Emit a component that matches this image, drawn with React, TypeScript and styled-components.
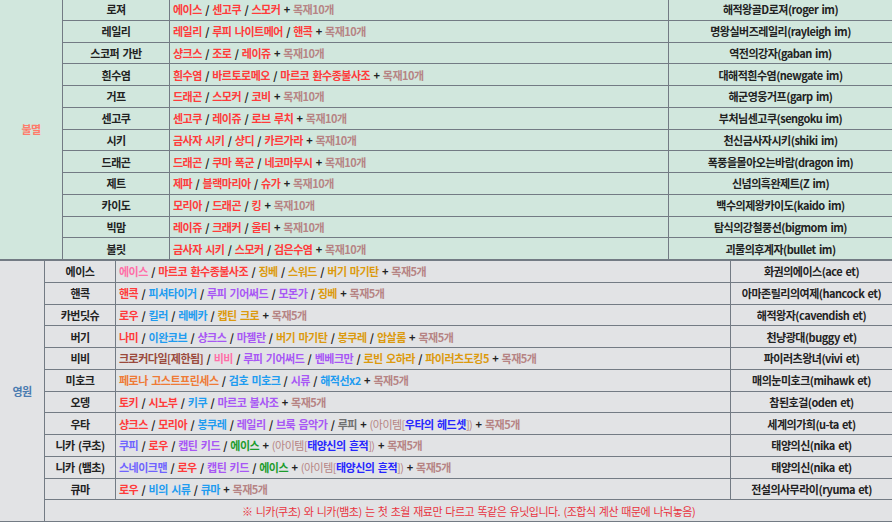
import { createGlobalStyle, styled } from 'styled-components';

const GlobalStyle = createGlobalStyle`
    body {
        margin: 0;
        font-family: "Noto Sans CJK KR", "Noto Sans", sans-serif;
        font-size: 11px;
        letter-spacing: -0.5px;
        word-spacing: 1.3px;
        color: #222;
        overflow: hidden;
    }
`;

const colors: Record<string, string> = {
    red: '#ff3b3b',
    pink: '#ff6fa8',
    gold: '#dc9a0e',
    blue: '#1f9cf0',
    purple: '#a857f5',
    violet: '#6f63ff',
    green: '#1c9c2c',
    gray: '#707070',
    brown: '#9b4a3c',
    orange: '#ef7b35',
    wood: '#b68484',
    item: '#2626ff',
};

const line = '#737b84';

type Part = [string, string];
type Row = { name: string; parts: Part[]; item?: string; wood: number; title: string };

const immortal: Row[] = [
    { name: '로져', parts: [['에이스', 'red'], ['센고쿠', 'red'], ['스모커', 'red']], wood: 10, title: '해적왕골D로져(roger im)' },
    { name: '레일리', parts: [['레일리', 'red'], ['루피 나이트메어', 'red'], ['핸콕', 'red']], wood: 10, title: '명왕실버즈레일리(rayleigh im)' },
    { name: '스코퍼 가반', parts: [['샹크스', 'red'], ['조로', 'red'], ['레이쥬', 'red']], wood: 10, title: '역전의강자(gaban im)' },
    { name: '흰수염', parts: [['흰수염', 'red'], ['바르토로메오', 'red'], ['마르코 환수종불사조', 'red']], wood: 10, title: '대해적흰수염(newgate im)' },
    { name: '거프', parts: [['드래곤', 'red'], ['스모커', 'red'], ['코비', 'red']], wood: 10, title: '해군영웅거프(garp im)' },
    { name: '센고쿠', parts: [['센고쿠', 'red'], ['레이쥬', 'red'], ['로브 루치', 'red']], wood: 10, title: '부처님센고쿠(sengoku im)' },
    { name: '시키', parts: [['금사자 시키', 'red'], ['샹디', 'red'], ['카르가라', 'red']], wood: 10, title: '천신금사자시키(shiki im)' },
    { name: '드래곤', parts: [['드래곤', 'red'], ['쿠마 폭군', 'red'], ['네코마무시', 'red']], wood: 10, title: '폭풍을몰아오는바람(dragon im)' },
    { name: '제트', parts: [['제파', 'red'], ['블랙마리아', 'red'], ['슈가', 'red']], wood: 10, title: '신념의흑완제트(Z im)' },
    { name: '카이도', parts: [['모리아', 'red'], ['드래곤', 'red'], ['킹', 'red']], wood: 10, title: '백수의제왕카이도(kaido im)' },
    { name: '빅맘', parts: [['레이쥬', 'red'], ['크래커', 'red'], ['울티', 'red']], wood: 10, title: '탐식의강철풍선(bigmom im)' },
    { name: '불릿', parts: [['금사자 시키', 'red'], ['스모커', 'red'], ['검은수염', 'red']], wood: 10, title: '괴물의후계자(bullet im)' },
];

const eternal: Row[] = [
    { name: '에이스', parts: [['에이스', 'pink'], ['마르코 환수종불사조', 'red'], ['징베', 'gold'], ['스워드', 'gold'], ['버기 마기탄', 'gold']], wood: 5, title: '화권의에이스(ace et)' },
    { name: '핸콕', parts: [['핸콕', 'red'], ['피셔타이거', 'blue'], ['루피 기어써드', 'purple'], ['모몬가', 'purple'], ['징베', 'gold']], wood: 5, title: '아마존릴리의여제(hancock et)' },
    { name: '카번딧슈', parts: [['로우', 'red'], ['킬러', 'blue'], ['레베카', 'blue'], ['캡틴 크로', 'gold']], wood: 5, title: '해적왕자(cavendish et)' },
    { name: '버기', parts: [['나미', 'red'], ['이완코브', 'blue'], ['샹크스', 'purple'], ['마젤란', 'purple'], ['버기 마기탄', 'gold'], ['봉쿠레', 'gold'], ['압살롬', 'gold']], wood: 5, title: '천냥광대(buggy et)' },
    { name: '비비', parts: [['크로커다일[제한됨]', 'brown'], ['비비', 'pink'], ['루피 기어써드', 'purple'], ['벤베크만', 'purple'], ['로빈 오하라', 'gold'], ['파이러츠도킹5', 'gold']], wood: 5, title: '파이러츠왕녀(vivi et)' },
    { name: '미호크', parts: [['페로나 고스트프린세스', 'orange'], ['검호 미호크', 'blue'], ['시류', 'purple'], ['해적선x2', 'blue']], wood: 5, title: '매의눈미호크(mihawk et)' },
    { name: '오뎅', parts: [['토키', 'red'], ['시노부', 'red'], ['키쿠', 'blue'], ['마르코 불사조', 'purple']], wood: 5, title: '참된호걸(oden et)' },
    { name: '우타', parts: [['샹크스', 'red'], ['모리아', 'red'], ['봉쿠레', 'blue'], ['레일리', 'purple'], ['브룩 음악가', 'purple'], ['루피', 'gray']], item: '우타의 헤드셋', wood: 5, title: '세계의가희(u-ta et)' },
    { name: '니카 (쿠초)', parts: [['쿠피', 'violet'], ['로우', 'red'], ['캡틴 키드', 'purple'], ['에이스', 'green']], item: '태양신의 흔적', wood: 5, title: '태양의신(nika et)' },
    { name: '니카 (뱀초)', parts: [['스네이크맨', 'violet'], ['로우', 'red'], ['캡틴 키드', 'purple'], ['에이스', 'green']], item: '태양신의 흔적', wood: 5, title: '태양의신(nika et)' },
    { name: '큐마', parts: [['로우', 'red'], ['비의 시류', 'blue'], ['큐마', 'blue']], wood: 5, title: '전설의사무라이(ryuma et)' },
];

const Page = styled.div`
    margin-top: -2px;
`;

const Table = styled.div<{ $cols: string; $bg: string }>`
    display: grid;
    grid-template-columns: ${p => p.$cols};
    grid-auto-rows: 20.75px;
    gap: 1px;
    background: ${line};
    border-top: 1px solid ${line};
    border-bottom: 1px solid ${line};

    & > * {
        background: ${p => p.$bg};
    }
`;

const GroupLabel = styled.div<{ $rows: number; $color: string }>`
    grid-row: span ${p => p.$rows};
    display: flex;
    align-items: center;
    justify-content: center;
    color: ${p => p.$color};
    font-weight: bold;
`;

const NameCell = styled.div`
    display: flex;
    align-items: center;
    justify-content: center;
    font-weight: bold;
    white-space: nowrap;
`;

const MaterialCell = styled.div`
    display: flex;
    align-items: center;
    padding-left: 3px;
    font-weight: bold;
    white-space: pre;
    overflow: hidden;
`;

const TitleCell = styled(NameCell)``;

const NoteCell = styled.div`
    grid-column: span 3;
    display: flex;
    align-items: center;
    justify-content: center;
    color: #e8333f;
`;

const Token = styled.span<{ $c: string }>`
    color: ${p => colors[p.$c]};
`;

const ItemName = styled.span`
    color: ${colors.item};
    font-weight: bold;
`;

const ItemWrap = styled.span`
    color: ${colors.wood};
    font-weight: normal;
`;

const Materials = ({ row }: { row: Row }) => (
    <MaterialCell>
        {row.parts.map(([text, c], i) => (
            <span key={i}>
                {i > 0 && ' / '}
                <Token $c={c}>{text}</Token>
            </span>
        ))}
        {' + '}
        {row.item && (
            <>
                <ItemWrap>(아이템[<ItemName>{row.item}</ItemName>])</ItemWrap>
                {' + '}
            </>
        )}
        <Token $c="wood">목재{row.wood}개</Token>
    </MaterialCell>
);

const Rows = ({ rows }: { rows: Row[] }) => (
    <>
        {rows.map(row => [
            <NameCell key={row.name + 'n'}>{row.name}</NameCell>,
            <Materials key={row.name + 'm'} row={row} />,
            <TitleCell key={row.name + 't'}>{row.title}</TitleCell>,
        ])}
    </>
);

export default function App() {
    return (
        <Page>
            <GlobalStyle />
            <Table $cols="62px 106px 498px 1fr" $bg="#d1e7dd">
                <GroupLabel $rows={12} $color="#ff7b6b">불멸</GroupLabel>
                <Rows rows={immortal} />
            </Table>
            <Table $cols="44px 70px 614px 1fr" $bg="#e2e3e5">
                <GroupLabel $rows={12} $color="#4a7bb0">영원</GroupLabel>
                <Rows rows={eternal} />
                <NoteCell>※ 니카(쿠초) 와 니카(뱀초) 는 첫 초월 재료만 다르고 똑같은 유닛입니다. (조합식 계산 때문에 나눠놓음)</NoteCell>
            </Table>
        </Page>
    );
}
